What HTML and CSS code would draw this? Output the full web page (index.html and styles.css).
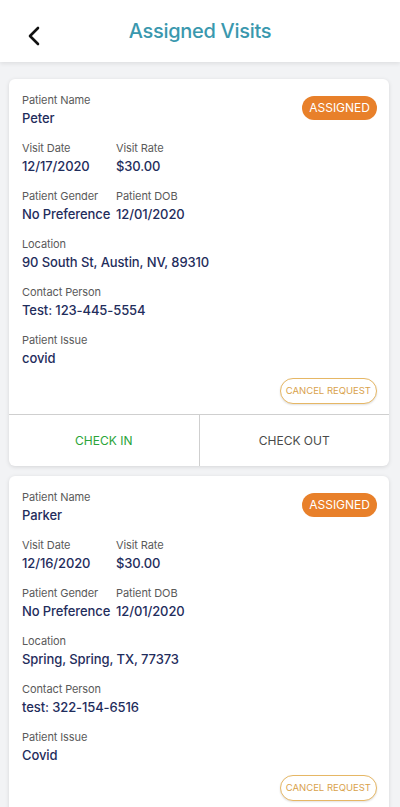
FILE: index.html
```html
<!DOCTYPE html>
<html lang="en">
<head>
    <meta charset="UTF-8">
    <meta name="viewport" content="width=device-width, initial-scale=1.0">
    <title>Assigned Visits</title>
    <link rel="stylesheet" href="styles.css">
</head>
<body>
    <header class="topo">
        <a class="voltar" href="#">
            <svg width="14" height="20" viewBox="0 0 14 20"><path d="M11 2 L3 10 L11 18" fill="none" stroke="#111" stroke-width="2.6" stroke-linecap="round" stroke-linejoin="round"/></svg>
        </a>
        <h1>Assigned Visits</h1>
    </header>

    <main class="lista">
        <section class="card">
            <div class="corpo">
                <div class="linha">
                    <div class="campo">
                        <p class="rotulo">Patient Name</p>
                        <p class="valor">Peter</p>
                    </div>
                    <span class="status">ASSIGNED</span>
                </div>
                <div class="linha">
                    <div class="campo col1">
                        <p class="rotulo">Visit Date</p>
                        <p class="valor">12/17/2020</p>
                    </div>
                    <div class="campo">
                        <p class="rotulo">Visit Rate</p>
                        <p class="valor">$30.00</p>
                    </div>
                </div>
                <div class="linha">
                    <div class="campo col1">
                        <p class="rotulo">Patient Gender</p>
                        <p class="valor">No Preference</p>
                    </div>
                    <div class="campo">
                        <p class="rotulo">Patient DOB</p>
                        <p class="valor">12/01/2020</p>
                    </div>
                </div>
                <div class="campo">
                    <p class="rotulo">Location</p>
                    <p class="valor">90 South St, Austin, NV, 89310</p>
                </div>
                <div class="campo">
                    <p class="rotulo">Contact Person</p>
                    <p class="valor">Test: 123-445-5554</p>
                </div>
                <div class="campo">
                    <p class="rotulo">Patient Issue</p>
                    <p class="valor">covid</p>
                </div>
                <div class="acao">
                    <button class="cancelar">CANCEL REQUEST</button>
                </div>
            </div>
            <div class="botoes">
                <button class="checkin">CHECK IN</button>
                <button class="checkout">CHECK OUT</button>
            </div>
        </section>

        <section class="card">
            <div class="corpo">
                <div class="linha">
                    <div class="campo">
                        <p class="rotulo">Patient Name</p>
                        <p class="valor">Parker</p>
                    </div>
                    <span class="status">ASSIGNED</span>
                </div>
                <div class="linha">
                    <div class="campo col1">
                        <p class="rotulo">Visit Date</p>
                        <p class="valor">12/16/2020</p>
                    </div>
                    <div class="campo">
                        <p class="rotulo">Visit Rate</p>
                        <p class="valor">$30.00</p>
                    </div>
                </div>
                <div class="linha">
                    <div class="campo col1">
                        <p class="rotulo">Patient Gender</p>
                        <p class="valor">No Preference</p>
                    </div>
                    <div class="campo">
                        <p class="rotulo">Patient DOB</p>
                        <p class="valor">12/01/2020</p>
                    </div>
                </div>
                <div class="campo">
                    <p class="rotulo">Location</p>
                    <p class="valor">Spring, Spring, TX, 77373</p>
                </div>
                <div class="campo">
                    <p class="rotulo">Contact Person</p>
                    <p class="valor">test: 322-154-6516</p>
                </div>
                <div class="campo">
                    <p class="rotulo">Patient Issue</p>
                    <p class="valor">Covid</p>
                </div>
                <div class="acao">
                    <button class="cancelar">CANCEL REQUEST</button>
                </div>
            </div>
            <div class="botoes">
                <button class="checkin">CHECK IN</button>
                <button class="checkout">CHECK OUT</button>
            </div>
        </section>
    </main>
</body>
</html>
```
FILE: styles.css
```css
body{
    margin: 0;
    background: #f2f3f5;
    font-family: Inter, "Noto Sans", Arial, sans-serif;
    color: #1f2d5c;
}

.topo{
    height: 62px;
    background: white;
    display: flex;
    align-items: center;
    justify-content: center;
    position: relative;
    box-shadow: 0 2px 4px rgba(0, 0, 0, 0.08);
}

.voltar{
    position: absolute;
    left: 27px;
    top: 26px;
    display: flex;
}

.topo h1{
    margin: 0;
    font-size: 20px;
    font-weight: 500;
    color: #3a98ae;
    letter-spacing: -0.3px;
}

.lista{
    padding: 17px 11px 0 9px;
}

.card{
    background: white;
    border-radius: 6px;
    box-shadow: 0 1px 4px rgba(0, 0, 0, 0.12);
    margin-bottom: 10px;
}

.corpo{
    padding: 13px 12px 10px 13px;
    display: flex;
    flex-direction: column;
    gap: 13px;
}

.linha{
    display: flex;
    align-items: flex-start;
}

.col1{
    width: 94px;
}

p{
    margin: 0;
}

.rotulo{
    font-size: 11px;
    line-height: 17px;
    color: #5a5a5a;
    letter-spacing: -0.1px;
}

.valor{
    font-size: 13px;
    line-height: 18px;
    font-weight: 500;
    color: #1f2d5c;
    letter-spacing: -0.1px;
}

.status{
    margin-left: auto;
    margin-top: 4px;
    background: #e8802a;
    color: white;
    font-size: 12px;
    line-height: 16px;
    padding: 4px 7px;
    border-radius: 14px;
}

.acao{
    display: flex;
    justify-content: flex-end;
    margin-top: -2px;
}

.cancelar{
    font-family: inherit;
    background: white;
    border: 1px solid #e6b765;
    color: #d9a24c;
    font-size: 9.5px;
    line-height: 12px;
    padding: 6px 5px;
    border-radius: 13px;
    box-shadow: 0 1px 2px rgba(0, 0, 0, 0.12);
}

.botoes{
    display: flex;
    border-top: 1px solid #cfcfcf;
}

.botoes button{
    flex: 1;
    height: 51px;
    background: none;
    border: none;
    font-family: inherit;
    font-size: 12px;
}

.checkin{
    color: #2aa43a;
    border-right: 1px solid #cfcfcf !important;
}

.checkout{
    color: #4a4a4a;
}
```
